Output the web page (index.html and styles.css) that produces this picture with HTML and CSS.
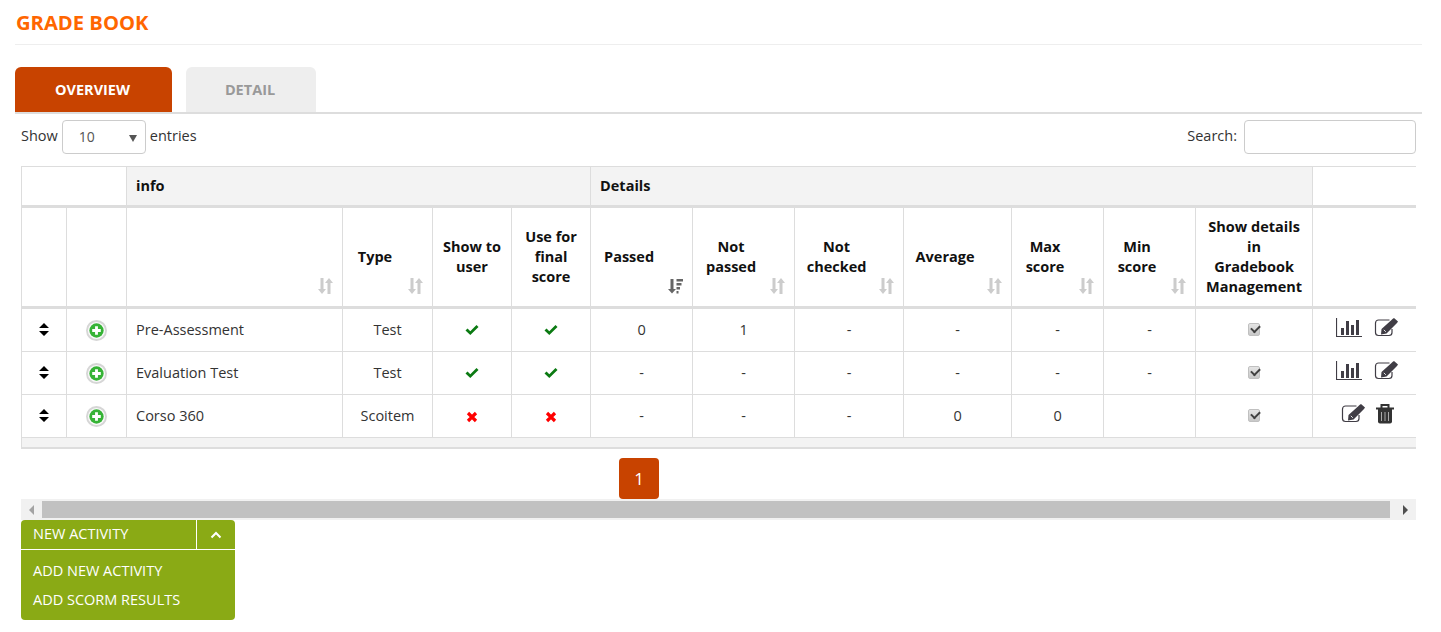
FILE: index.html
```html
<!DOCTYPE html>
<html lang="en">
<head>
<meta charset="utf-8">
<title>Grade Book</title>
<link rel="stylesheet" href="styles.css">
</head>
<body>
<svg class="defs" width="0" height="0" aria-hidden="true">
  <symbol id="i-sort" viewBox="0 0 15 16"><path d="M2.500 0h3v11H8L4 16 0 11h2.500zM11 0l4 5h-2.500v11h-3V5H7z" fill="currentColor"/></symbol>
  <symbol id="i-sort-desc" viewBox="0 0 15 16"><path d="M2.500 1h3v10H8L4 15.500 0 11h2.500z" fill="currentColor"/><path d="M8.500 1H15v2.500H8.500zM8.500 5H13.500v2.500H8.500zM8.500 9H12v2.500H8.500zM8.500 13H10.500v2.500H8.500z" fill="currentColor"/></symbol>
  <symbol id="i-updown" viewBox="0 0 10 13"><path d="M5 0l5 5H0zM5 13L0 8h10z" fill="currentColor"/></symbol>
  <symbol id="i-plus" viewBox="0 0 22 22"><circle cx="11" cy="11" r="11" fill="#d6d6d6"/><circle cx="11" cy="11" r="9" fill="#fafafa"/><circle cx="11" cy="11" r="7.500" fill="#36b336"/><path d="M9.500 6.500h3v3h3v3h-3v3h-3v-3h-3v-3h3z" fill="#fff"/></symbol>
  <symbol id="i-check" viewBox="0 0 14 12"><path d="M0.500 6.500L2.500 4.500 5.300 7.300 11.500 1 13.500 3 5.300 11z" fill="#0b7a12"/></symbol>
  <symbol id="i-times" viewBox="0 0 12 12"><path d="M2 2l8 8M10 2l-8 8" stroke="#f00" stroke-width="3.200" fill="none"/></symbol>
  <symbol id="i-chart" viewBox="0 0 26 20"><path d="M0.500 0v18.500H26" stroke="#403d45" stroke-width="1.200" fill="none"/><path d="M5 10h3v7H5zM10 3h3v14h-3zM15 7h3v10h-3zM20 2h3v15h-3z" fill="#403d45"/></symbol>
  <symbol id="i-edit" viewBox="0 0 24 19"><path d="M15.500 2H4.500A3 3 0 0 0 1.500 5v9.500a3 3 0 0 0 3 3H15a3 3 0 0 0 3-3V11" stroke="#403d45" stroke-width="1.200" fill="none"/><path d="M7.500 11L17.500 2l1-1 1.500-1 4 3.500-1 1.500-1.500 1.500L12.500 15.500l-5.500 1z" fill="#403d45"/><path d="M9.800 11.800l2 2" stroke="#fff" stroke-width="0.900"/></symbol>
  <symbol id="i-trash" viewBox="0 0 18 20"><path d="M0 3.500h18v2H0z" fill="#333"/><path d="M5.500 4V1h7v3" stroke="#333" stroke-width="2" fill="none"/><path d="M2 5h14v12.500a2 2 0 0 1-2 2H4a2 2 0 0 1-2-2z" fill="#333"/><path d="M5.500 8v9M9 8v9M12.500 8v9" stroke="#aaa" stroke-width="1"/></symbol>
</svg>
<main class="page">
  <h1 class="title">GRADE BOOK</h1>
  <nav class="tabs">
    <a class="tab tab-active">OVERVIEW</a>
    <a class="tab tab-muted">DETAIL</a>
  </nav>
  <section class="panel">
    <div class="controls">
      <label class="ctl"><span class="ctl-text">Show</span> <span class="select"><span>10</span><i class="caret"></i></span> <span class="ctl-text">entries</span></label>
      <label class="ctl"><span class="ctl-text">Search:</span> <input class="search" type="text"></label>
    </div>
    <div class="table-clip">
      <table class="grid">
        <colgroup>
          <col class="c1"><col class="c2"><col class="c3"><col class="c4"><col class="c5"><col class="c5"><col class="c7"><col class="c7"><col class="c9"><col class="c10"><col class="c11"><col class="c11"><col class="c13"><col class="c14">
        </colgroup>
        <thead>
          <tr class="group">
            <th colspan="2" class="blank"></th>
            <th colspan="4">info</th>
            <th colspan="7">Details</th>
            <th class="blank"></th>
          </tr>
          <tr class="heads">
            <th></th>
            <th></th>
            <th class="sortable"><svg class="sort"><use href="#i-sort"/></svg></th>
            <th class="sortable">Type<svg class="sort"><use href="#i-sort"/></svg></th>
            <th>Show to user</th>
            <th>Use for final score</th>
            <th class="sortable">Passed<svg class="sort active"><use href="#i-sort-desc"/></svg></th>
            <th class="sortable">Not passed<svg class="sort"><use href="#i-sort"/></svg></th>
            <th class="sortable">Not checked<svg class="sort"><use href="#i-sort"/></svg></th>
            <th class="sortable">Average<svg class="sort"><use href="#i-sort"/></svg></th>
            <th class="sortable">Max score<svg class="sort"><use href="#i-sort"/></svg></th>
            <th class="sortable">Min score<svg class="sort"><use href="#i-sort"/></svg></th>
            <th>Show details<br>in<br>Gradebook<br>Management</th>
            <th></th>
          </tr>
        </thead>
        <tbody>
          <tr>
            <td><svg class="ico-updown"><use href="#i-updown"/></svg></td>
            <td><svg class="ico-plus"><use href="#i-plus"/></svg></td>
            <td class="name">Pre-Assessment</td>
            <td>Test</td>
            <td><svg class="ico-check"><use href="#i-check"/></svg></td>
            <td><svg class="ico-check"><use href="#i-check"/></svg></td>
            <td>0</td><td>1</td><td>-</td><td>-</td><td>-</td><td>-</td>
            <td><span class="tick"></span></td>
            <td class="actions"><svg class="ico-chart"><use href="#i-chart"/></svg><svg class="ico-edit"><use href="#i-edit"/></svg></td>
          </tr>
          <tr>
            <td><svg class="ico-updown"><use href="#i-updown"/></svg></td>
            <td><svg class="ico-plus"><use href="#i-plus"/></svg></td>
            <td class="name">Evaluation Test</td>
            <td>Test</td>
            <td><svg class="ico-check"><use href="#i-check"/></svg></td>
            <td><svg class="ico-check"><use href="#i-check"/></svg></td>
            <td>-</td><td>-</td><td>-</td><td>-</td><td>-</td><td>-</td>
            <td><span class="tick"></span></td>
            <td class="actions"><svg class="ico-chart"><use href="#i-chart"/></svg><svg class="ico-edit"><use href="#i-edit"/></svg></td>
          </tr>
          <tr>
            <td><svg class="ico-updown"><use href="#i-updown"/></svg></td>
            <td><svg class="ico-plus"><use href="#i-plus"/></svg></td>
            <td class="name">Corso 360</td>
            <td>Scoitem</td>
            <td><svg class="ico-times"><use href="#i-times"/></svg></td>
            <td><svg class="ico-times"><use href="#i-times"/></svg></td>
            <td>-</td><td>-</td><td>-</td><td>0</td><td>0</td><td></td>
            <td><span class="tick"></span></td>
            <td class="actions"><svg class="ico-edit"><use href="#i-edit"/></svg><svg class="ico-trash"><use href="#i-trash"/></svg></td>
          </tr>
        </tbody>
      </table>
      <div class="table-foot"></div>
    </div>
    <div class="pager"><a class="page-num">1</a></div>
    <div class="scrollbar">
      <span class="sb-btn"><i class="sb-left"></i></span>
      <span class="sb-thumb"></span>
      <span class="sb-btn"><i class="sb-right"></i></span>
    </div>
    <div class="dropdown">
      <div class="dd-head">
        <span class="dd-label">NEW ACTIVITY</span>
        <span class="dd-toggle"><svg class="chev" viewBox="0 0 12 8"><path d="M1.500 6.500L6 2l4.500 4.500" stroke="#fff" stroke-width="2" fill="none"/></svg></span>
      </div>
      <ul class="dd-menu">
        <li>ADD NEW ACTIVITY</li>
        <li>ADD SCORM RESULTS</li>
      </ul>
    </div>
  </section>
</main>
</body>
</html>
```

FILE: styles.css
```css
* { box-sizing: border-box; }
html, body { margin: 0; padding: 0; background: #fff; }
body { font-family: "Open Sans", "Liberation Sans", sans-serif; font-size: 14.5px; line-height: 20px; color: #333; }
.defs { display: block; height: 0; }
.page { padding: 0 19px 0 15px; }
.title { margin: 0; height: 45px; padding: 8px 0 0 1px; border-bottom: 1px solid #eee; font-size: 20.2px; line-height: 28px; font-weight: 700; color: #ff6600; }
.tabs { display: flex; gap: 14px; margin-top: 22px; height: 47px; border-bottom: 2px solid #ddd; }
.tab { display: flex; align-items: center; justify-content: center; height: 45px; padding-right: 2px; border-radius: 6px 6px 0 0; font-weight: 700; font-size: 14.5px; }
.tab-active { width: 157px; background: #c84300; color: #fff; }
.tab-muted { width: 130px; background: #eee; color: #999; }
.panel { padding: 0 6px 0 6px; }
.controls { display: flex; justify-content: space-between; align-items: center; height: 34px; margin-top: 6px; }
.ctl { display: flex; align-items: center; gap: 4px; color: #333; }
.ctl-text { margin-bottom: 3px; }
.select { position: relative; display: flex; align-items: center; width: 84px; height: 34px; padding-left: 16px; border: 1px solid #ccc; border-radius: 4px; color: #555; font-size: 14px; }
.caret { position: absolute; right: 8px; top: 14px; width: 0; height: 0; border-left: 4px solid transparent; border-right: 4px solid transparent; border-top: 7px solid #555; }
.search { width: 172px; height: 34px; margin-left: 3px; border: 1px solid #ccc; border-radius: 4px; background: #fff; }
.table-clip { margin-top: 12px; overflow: hidden; }
.grid { width: 1400px; table-layout: fixed; border-collapse: separate; border-spacing: 0; border-top: 1px solid #ddd; }
.c1 { width: 46px; } .c2 { width: 60px; } .c3 { width: 216px; } .c4 { width: 90px; }
.c5 { width: 79px; } .c7 { width: 102px; } .c9 { width: 109px; } .c10 { width: 108px; }
.c11 { width: 92px; } .c13 { width: 117px; } .c14 { width: 108px; }
.grid th, .grid td { padding: 0; border-right: 1px solid #ddd; text-align: center; vertical-align: middle; }
.grid tr > :first-child { border-left: 1px solid #ddd; }
.grid tr > :last-child { border-right: 0; }
.grid th { position: relative; font-weight: 700; color: #111; border-bottom: 3px solid #ddd; }
.group th { height: 41px; padding: 0 9px; text-align: left; background: #f3f3f3; }
.group th.blank { background: #fff; }
.heads th { height: 101px; padding: 0 6px; }
.heads th.sortable { padding: 0 33px 0 8px; }
.grid td { height: 43px; border-bottom: 1px solid #ddd; color: #333; }
.grid td.name { padding-left: 9px; text-align: left; }
.sort { position: absolute; right: 9px; bottom: 12px; width: 15px; height: 16px; color: #ccc; }
.sort.active { color: #666; }
svg { vertical-align: middle; }
.ico-updown { display: block; width: 10px; height: 13px; margin: 0 auto 2px; color: #000; }
.ico-plus { display: block; width: 21px; height: 21px; margin: 1px auto 0; }
.ico-check { width: 14px; height: 12px; margin-bottom: 3px; }
.ico-times { width: 12px; height: 12px; margin-bottom: 1px; }
.tick { display: inline-block; width: 12px; height: 13px; margin: 0 1px 3px 0; border-radius: 2px; background: linear-gradient(#e4e4e4, #c8c8c8); border: 1px solid #c0c0c0; position: relative; vertical-align: middle; }
.tick::after { content: ""; position: absolute; left: 2px; top: 1px; width: 7px; height: 4px; border-left: 2px solid #404040; border-bottom: 2px solid #404040; transform: rotate(-45deg); }
.actions { white-space: nowrap; }
.ico-chart { width: 26px; height: 20px; margin: 0 12px 5px 0; }
.ico-edit { width: 24px; height: 19px; margin-bottom: 6px; }
.actions .ico-edit + .ico-trash { margin: 0 0 5px 11px; }
.ico-trash { width: 18px; height: 20px; }
.table-foot { height: 11px; background: #f3f3f3; border-left: 1px solid #ddd; border-bottom: 2px solid #ddd; }
.pager { padding: 9px 0 0 598px; height: 50px; }
.page-num { display: flex; align-items: center; justify-content: center; width: 40px; height: 41px; border-radius: 4px; background: #c84300; color: #fff; font-size: 17px; }
.scrollbar { display: flex; align-items: center; height: 21px; background: #f1f1f1; }
.sb-btn { display: flex; align-items: center; justify-content: center; width: 21px; height: 17px; }
.sb-thumb { flex: 1; height: 17px; background: #c1c1c1; margin-right: 5px; }
.sb-btn:last-child { width: 21px; }
.sb-left { width: 0; height: 0; border-top: 5px solid transparent; border-bottom: 5px solid transparent; border-right: 5px solid #a3a3a3; }
.sb-right { width: 0; height: 0; border-top: 5px solid transparent; border-bottom: 5px solid transparent; border-left: 5px solid #505050; }
.dropdown { width: 214px; height: 100px; background: #8aaa15; border-radius: 4px; color: #fff; }
.dd-head { display: flex; height: 30px; border-bottom: 1px solid #fff; }
.dd-label { flex: 1; padding: 4px 0 0 12px; }
.dd-toggle { display: flex; align-items: center; justify-content: center; width: 39px; border-left: 1px solid #fff; }
.chev { width: 12px; height: 8px; }
.dd-menu { margin: 0; padding: 6px 0 0 12px; list-style: none; }
.dd-menu li { height: 29px; line-height: 29px; }
```
